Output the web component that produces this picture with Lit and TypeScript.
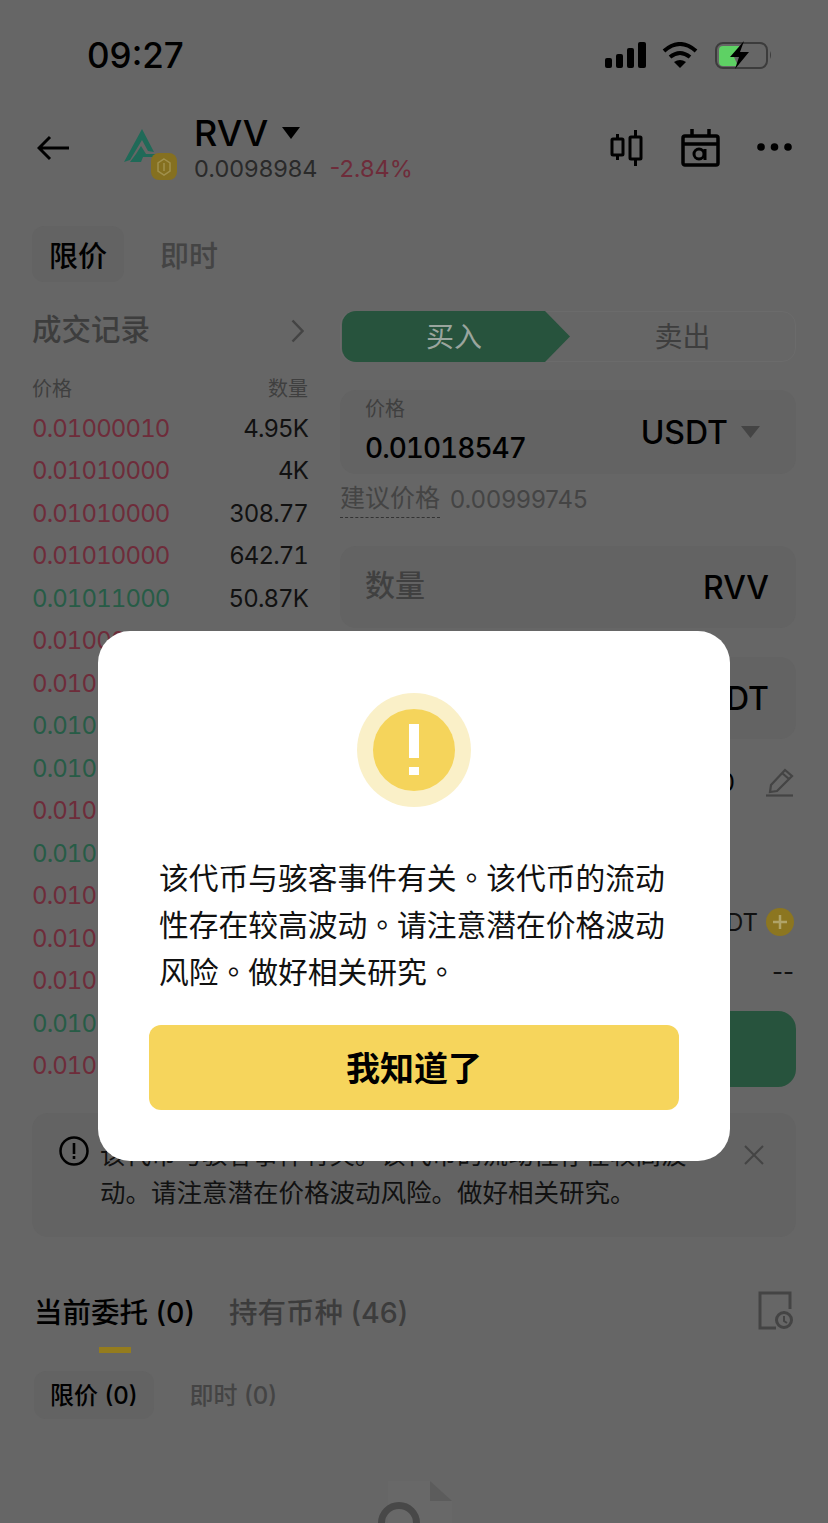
import { LitElement, css, html, svg } from 'lit';
import { customElement } from 'lit/decorators.js';

const rows: [string, string, 'r' | 'g'][] = [
    ['0.01000010', '4.95K', 'r'],
    ['0.01010000', '4K', 'r'],
    ['0.01010000', '308.77', 'r'],
    ['0.01010000', '642.71', 'r'],
    ['0.01011000', '50.87K', 'g'],
    ['0.01000', '', 'r'],
    ['0.010', '', 'r'],
    ['0.010', '', 'g'],
    ['0.010', '', 'g'],
    ['0.010', '', 'r'],
    ['0.010', '', 'g'],
    ['0.010', '', 'r'],
    ['0.010', '', 'r'],
    ['0.010', '', 'r'],
    ['0.010', '', 'g'],
    ['0.010', '', 'r'],
];

const logo = svg`
    <path fill="#1f6a58" d="M18 0 L30 23 L24 22 L18 11 L6 31 L0 33 Z"/>
    <path fill="#1f6a58" d="M12 25 L17 17 L22 25 L32 25 L32 28 L19 28 L17 33 L6 33 Z"/>
    <rect x="27" y="24" width="26" height="27" rx="8" fill="#857020"/>
    <path fill="none" stroke="#a0904c" stroke-width="1.5" d="M40 30 L46 34 L46 42 L40 46 L34 42 L34 34 Z M40 34 L40 42"/>
`;

@customElement('app-root')
export class AppRoot extends LitElement {
    static styles = css`
        :host {
            display: block;
            position: relative;
            width: 828px;
            height: 1523px;
            overflow: hidden;
            background: #666;
            color: #000;
            font-family: Inter, 'Noto Sans CJK SC', sans-serif;
        }

        svg {
            display: block;
            flex: none;
        }

        .status {
            display: flex;
            align-items: center;
            height: 110px;
            padding: 0 56px 0 87px;
        }

        .time {
            font-size: 35px;
            font-weight: 500;
            margin-right: auto;
        }

        .signal {
            margin-right: 15px;
        }

        .wifi {
            margin-right: 16px;
        }

        .header {
            display: flex;
            align-items: center;
            height: 76px;
            padding: 0 36px 0 37px;
        }

        .logo {
            margin: 13px 0 0 54px;
        }

        .coin {
            margin: -3px 0 0 17px;
        }

        .coin-name {
            display: flex;
            align-items: center;
            height: 44px;
            font-size: 36px;
            font-weight: 500;
        }

        .caret {
            margin-left: 14px;
        }

        .coin-price {
            display: flex;
            gap: 12px;
            font-size: 23.5px;
            line-height: 28px;
            color: #2a2a2a;
        }

        .down {
            color: #6e2c3a;
        }

        .header-icons {
            display: flex;
            align-items: center;
            margin-left: auto;
        }

        .candle {
            margin-right: 38px;
        }

        .calendar {
            margin-right: 37px;
        }

        .dots {
            margin-bottom: 3px;
        }

        .tabs {
            display: flex;
            align-items: center;
            margin: 40px 0 0 32px;
            height: 56px;
        }

        .tab {
            font-size: 29px;
            color: #444;
            font-weight: 500;
        }

        .tab.active {
            display: flex;
            align-items: center;
            height: 56px;
            padding: 0 17px;
            margin-right: 36px;
            background: #636363;
            border-radius: 12px;
            color: #000;
        }

        .columns {
            display: flex;
            margin: 29px 32px 0;
            gap: 32px;
        }

        .left {
            width: 276px;
        }

        .right {
            width: 456px;
        }

        .book-title {
            display: flex;
            align-items: center;
            justify-content: space-between;
            height: 32px;
            font-size: 29.5px;
            font-weight: 500;
            color: #3d3d3d;
            padding-right: 4px;
        }

        .book-title svg {
            margin-top: 8px;
        }

        .book-head {
            display: flex;
            justify-content: space-between;
            align-items: center;
            height: 28px;
            margin: 30px 0 5.75px;
            font-size: 20px;
            color: #3f3f3f;
        }

        .book-row {
            display: flex;
            justify-content: space-between;
            align-items: center;
            height: 42.5px;
            font-size: 24px;
            font-variant-numeric: tabular-nums;
            letter-spacing: -0.9px;
            color: #111;
        }

        .book-row .r {
            color: #6e2c3a;
        }

        .book-row .g {
            color: #275c46;
        }

        .side {
            display: flex;
            height: 51px;
            border: 1px solid #6b6b6b;
            border-radius: 14px;
            box-sizing: border-box;
            font-size: 28px;
        }

        .side-buy {
            width: 228px;
            margin: -1px 0 -1px 1px;
            display: flex;
            align-items: center;
            justify-content: center;
            padding: 0 4px 4px 0;
            box-sizing: border-box;
            background: #27533d;
            border-radius: 14px 0 0 14px;
            clip-path: polygon(0 0, 203px 0, 100% 50%, 203px 100%, 0 100%);
            color: #9aa59e;
        }

        .side-sell {
            flex: 1;
            display: flex;
            align-items: center;
            justify-content: center;
            padding-bottom: 4px;
            color: #3e3e3e;
        }

        .field {
            display: flex;
            align-items: center;
            justify-content: space-between;
            box-sizing: border-box;
            height: 82px;
            padding: 0 27px 0 25px;
            background: #636363;
            border-radius: 16px;
            font-size: 32px;
            font-weight: 500;
        }

        .field-price {
            height: 84px;
            margin-top: 28px;
            padding-right: 36px;
        }

        .field-label {
            font-size: 20px;
            font-weight: 400;
            line-height: 26px;
            color: #3f3f3f;
        }

        .field-value {
            font-size: 28px;
            font-variant-numeric: tabular-nums;
            letter-spacing: -1px;
            line-height: 42px;
            margin-top: 5px;
        }

        .unit {
            display: flex;
            align-items: center;
            gap: 13px;
        }

        .hint {
            display: flex;
            align-items: flex-start;
            height: 44px;
            margin-top: 8px;
            font-size: 24px;
            color: #444;
        }

        .hint-label {
            height: 35px;
            font-size: 25px;
            line-height: 32px;
            border-bottom: 1px dashed #333;
            margin-right: 10px;
        }

        .hint-value {
            line-height: 36px;
        }

        .field-qty {
            margin-top: 20px;
        }

        .field-total {
            margin-top: 29px;
            justify-content: flex-end;
        }

        .placeholder {
            margin-bottom: 8px;
            font-size: 30px;
            font-weight: 500;
            color: #404040;
        }

        .note-row {
            display: flex;
            align-items: center;
            justify-content: flex-end;
            gap: 30px;
            height: 30px;
            margin-top: 28px;
            padding-right: 2px;
            font-size: 24px;
        }

        .avail {
            display: flex;
            align-items: center;
            justify-content: flex-end;
            gap: 8px;
            height: 30px;
            margin-top: 110px;
            padding-right: 2px;
            font-size: 24px;
            color: #111;
        }

        .plus {
            display: flex;
            align-items: center;
            justify-content: center;
            width: 28px;
            height: 28px;
            border-radius: 50%;
            background: #8c7620;
        }

        .cost {
            height: 30px;
            line-height: 30px;
            margin-top: 20px;
            text-align: right;
            padding-right: 2px;
            font-size: 24px;
            color: #111;
        }

        .submit {
            height: 76px;
            margin-top: 24px;
            background: #27533d;
            border-radius: 18px;
        }

        .notice {
            display: flex;
            align-items: flex-start;
            box-sizing: border-box;
            height: 124px;
            margin: 26px 32px 0;
            padding: 23px 32px 0 27px;
            background: #636363;
            border-radius: 16px;
        }

        .notice-text {
            width: 600px;
            margin-left: 11px;
            font-size: 25.5px;
            line-height: 38px;
            color: #111;
        }

        .notice-close {
            margin: 9px 0 0 auto;
        }

        .orders {
            display: flex;
            align-items: flex-start;
            margin: 54px 35px 0 34px;
        }

        .order-tab {
            display: flex;
            flex-direction: column;
            align-items: center;
            margin-right: 34px;
            font-size: 28.5px;
            line-height: 44px;
            color: #3c3c3c;
            font-weight: 500;
        }

        .order-tab.active {
            color: #000;
        }

        .order-tab.active::after {
            content: '';
            width: 32px;
            height: 6px;
            margin-top: 12px;
            background: #947c1e;
        }

        .orders-history {
            margin-left: auto;
        }

        .sub-tabs {
            display: flex;
            align-items: center;
            margin: 18px 0 0 34px;
            font-size: 24px;
            font-weight: 500;
            color: #444;
        }

        .sub-tab {
            padding-bottom: 3px;
        }

        .sub-tab.active {
            display: flex;
            align-items: center;
            box-sizing: border-box;
            height: 48px;
            padding: 0 16px 3px;
            margin-right: 36px;
            background: #636363;
            border-radius: 12px;
            color: #000;
        }

        .empty {
            display: flex;
            justify-content: center;
            margin-top: 62px;
        }

        .modal {
            position: absolute;
            top: 631px;
            left: 98px;
            width: 632px;
            height: 530px;
            box-sizing: border-box;
            display: flex;
            flex-direction: column;
            align-items: center;
            padding: 62px 51px 0;
            background: #fff;
            border-radius: 32px;
        }

        .modal-text {
            width: 510px;
            margin-top: 46px;
            font-family: 'Noto Sans CJK TC', sans-serif;
            font-size: 29.75px;
            line-height: 47px;
            color: #111;
        }

        .modal-button {
            display: flex;
            align-items: center;
            justify-content: center;
            box-sizing: border-box;
            width: 530px;
            height: 85px;
            margin-top: 31px;
            padding-bottom: 3px;
            background: #f6d55c;
            border-radius: 12px;
            font-size: 34px;
            font-weight: 700;
        }
    `;

    renderStatus() {
        return html`
            <div class="status">
                <span class="time">09:27</span>
                <svg class="signal" width="43" height="26" viewBox="0 0 43 26" fill="#000">
                    <rect x="1" y="16" width="7" height="10" rx="2"/>
                    <rect x="12" y="12" width="7" height="14" rx="2"/>
                    <rect x="23" y="6" width="7" height="20" rx="2"/>
                    <rect x="34" y="0" width="8" height="26" rx="2"/>
                </svg>
                <svg class="wifi" width="36" height="26" viewBox="0 0 36 26">
                    <path d="M2 9 Q18 -5 34 9 M8 15 Q18 7 28 15" fill="none" stroke="#000" stroke-width="4"/>
                    <path d="M12 20 Q18 16 24 20 L18 26 Z" fill="#000"/>
                </svg>
                <svg width="58" height="30" viewBox="0 0 58 30">
                    <rect x="2" y="3" width="51" height="25" rx="7" fill="none" stroke="#3c3c3c" stroke-width="2"/>
                    <path d="M5 10 Q5 6 9 6 L26 6 L20 17 L24 26 L9 26 Q5 26 5 22 Z" fill="#5ed164"/>
                    <path d="M56 11 Q58 15 56 19 Z" fill="#3c3c3c"/>
                    <path d="M30 1 L16 17 L25 17 L21 29 L35 12 L26 12 Z" fill="#000"/>
                </svg>
            </div>
        `;
    }

    renderHeader() {
        return html`
            <div class="header">
                <svg width="33" height="26" viewBox="0 0 33 26" fill="none" stroke="#000" stroke-width="3">
                    <path d="M32 13 H3 M13 2 L2 13 L13 24"/>
                </svg>
                <svg class="logo" width="53" height="51" viewBox="0 0 53 51">${logo}</svg>
                <div class="coin">
                    <div class="coin-name">
                        RVV
                        <svg class="caret" width="18" height="12" viewBox="0 0 18 12"><path d="M0 0 H18 L9 12 Z"/></svg>
                    </div>
                    <div class="coin-price">
                        <span>0.0098984</span>
                        <span class="down">-2.84%</span>
                    </div>
                </div>
                <div class="header-icons">
                    <svg class="candle" width="33" height="36" viewBox="0 0 33 36" fill="none" stroke="#000" stroke-width="3">
                        <rect x="2" y="9" width="11" height="16" rx="1"/>
                        <path d="M7.5 4 V9 M7.5 25 V30"/>
                        <rect x="20" y="7" width="11" height="22" rx="1"/>
                        <path d="M25.5 0 V7 M25.5 29 V36"/>
                    </svg>
                    <svg class="calendar" width="39" height="38" viewBox="0 0 39 38" fill="none" stroke="#000" stroke-width="3.5">
                        <rect x="2" y="7" width="35" height="29" rx="2"/>
                        <path d="M2 15 H37 M11 0 V7 M28 0 V7"/>
                        <circle cx="18" cy="25" r="5" stroke-width="3"/>
                        <path d="M24 20 V31" stroke-width="3"/>
                    </svg>
                    <svg class="dots" width="35" height="8" viewBox="0 0 35 8" fill="#000">
                        <circle cx="4" cy="4" r="3.8"/>
                        <circle cx="17.5" cy="4" r="3.8"/>
                        <circle cx="31" cy="4" r="3.8"/>
                    </svg>
                </div>
            </div>
        `;
    }

    renderBook() {
        return html`
            <div class="left">
                <div class="book-title">
                    成交记录
                    <svg width="13" height="24" viewBox="0 0 13 24" fill="none" stroke="#444" stroke-width="2.5">
                        <path d="M1.5 1.5 L11.5 12 L1.5 22.5"/>
                    </svg>
                </div>
                <div class="book-head"><span>价格</span><span>数量</span></div>
                ${rows.map(
                    ([price, qty, side]) => html`
                        <div class="book-row">
                            <span class=${side}>${price}</span>
                            <span>${qty}</span>
                        </div>
                    `,
                )}
            </div>
        `;
    }

    renderForm() {
        return html`
            <div class="right">
                <div class="side">
                    <div class="side-buy">买入</div>
                    <div class="side-sell">卖出</div>
                </div>
                <div class="field field-price">
                    <div>
                        <div class="field-label">价格</div>
                        <div class="field-value">0.01018547</div>
                    </div>
                    <div class="unit">
                        USDT
                        <svg width="19" height="12" viewBox="0 0 19 12" fill="#444"><path d="M0 0 H19 L9.5 12 Z"/></svg>
                    </div>
                </div>
                <div class="hint">
                    <span class="hint-label">建议价格</span>
                    <span class="hint-value">0.00999745</span>
                </div>
                <div class="field field-qty">
                    <span class="placeholder">数量</span>
                    <span>RVV</span>
                </div>
                <div class="field field-total"><span>USDT</span></div>
                <div class="note-row">
                    <span>0</span>
                    <svg width="29" height="30" viewBox="0 0 29 30" fill="none" stroke="#444" stroke-width="2.2">
                        <path d="M6 18 L20 3 L27 9 L12 24 L5 25 Z M17 6 L24 12"/>
                        <path d="M1 28.5 H28"/>
                    </svg>
                </div>
                <div class="avail">
                    <span>USDT</span>
                    <span class="plus">
                        <svg width="14" height="14" viewBox="0 0 14 14" stroke="#b0a468" stroke-width="2.5">
                            <path d="M7 0 V14 M0 7 H14"/>
                        </svg>
                    </span>
                </div>
                <div class="cost">--</div>
                <div class="submit"></div>
            </div>
        `;
    }

    renderOrders() {
        return html`
            <div class="orders">
                <div class="order-tab active">当前委托 (0)</div>
                <div class="order-tab">持有币种 (46)</div>
                <svg class="orders-history" width="36" height="40" viewBox="0 0 36 40" fill="none" stroke="#444" stroke-width="3">
                    <path d="M19 37 H3 V2 H33 V18"/>
                    <circle cx="27" cy="29" r="7.5"/>
                    <path d="M27 25 V30 L30 32" stroke-width="2"/>
                </svg>
            </div>
            <div class="sub-tabs">
                <div class="sub-tab active">限价 (0)</div>
                <div class="sub-tab">即时 (0)</div>
            </div>
            <div class="empty">
                <svg width="80" height="60" viewBox="0 0 80 60">
                    <path d="M14 0 H56 L78 20 V60 H14 Z" fill="#686868"/>
                    <path d="M56 0 L78 20 H56 Z" fill="#5c5c5c"/>
                    <circle cx="25" cy="42" r="17.5" fill="none" stroke="#484848" stroke-width="7"/>
                </svg>
            </div>
        `;
    }

    render() {
        return html`
            ${this.renderStatus()} ${this.renderHeader()}
            <div class="tabs">
                <div class="tab active">限价</div>
                <div class="tab">即时</div>
            </div>
            <div class="columns">${this.renderBook()} ${this.renderForm()}</div>
            <div class="notice">
                <svg width="30" height="30" viewBox="0 0 30 30">
                    <circle cx="15" cy="15" r="13.5" fill="none" stroke="#000" stroke-width="2.5"/>
                    <rect x="13.7" y="7" width="2.6" height="11" fill="#000"/>
                    <rect x="13.7" y="20" width="2.6" height="3" fill="#000"/>
                </svg>
                <div class="notice-text">该代币与骇客事件有关。该代币的流动性存在较高波动。请注意潜在价格波动风险。做好相关研究。</div>
                <svg class="notice-close" width="20" height="20" viewBox="0 0 20 20" stroke="#444" stroke-width="2">
                    <path d="M1 1 L19 19 M19 1 L1 19"/>
                </svg>
            </div>
            ${this.renderOrders()}
            <div class="modal">
                <svg width="114" height="114" viewBox="0 0 114 114">
                    <circle cx="57" cy="57" r="57" fill="#faf0c8"/>
                    <circle cx="57" cy="57" r="41" fill="#f5d45b"/>
                    <rect x="52" y="31" width="10" height="34" fill="#fff"/>
                    <rect x="52" y="74" width="10" height="8" fill="#fff"/>
                </svg>
                <div class="modal-text">该代币与骇客事件有关。该代币的流动性存在较高波动。请注意潜在价格波动风险。做好相关研究。</div>
                <div class="modal-button">我知道了</div>
            </div>
        `;
    }
}
